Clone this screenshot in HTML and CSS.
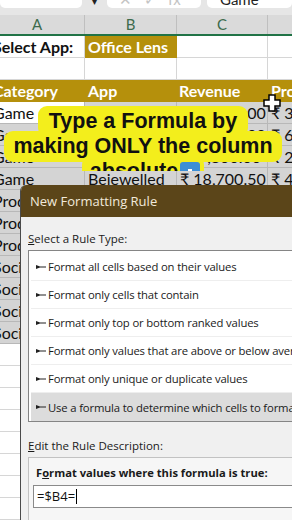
FILE: index.html
```html
<!DOCTYPE html>
<html lang="en">
<head>
    <meta charset="UTF-8">
    <meta name="viewport" content="width=device-width, initial-scale=1.0">
    <title>New Formatting Rule</title>
    <link rel="stylesheet" href="styles.css">
</head>
<body>
    <!-- formula bar strip -->
    <div class="toolbar">
        <div class="tb-box name-box"></div>
        <div class="tb-caret">▾</div>
        <div class="tb-box fx-box"><span class="tb-text faint">✕ &nbsp; ✓ &nbsp; fx</span></div>
        <div class="tb-box value-box"><span class="tb-text">Game</span></div>
    </div>

    <div class="col-heads">
        <div class="col-head">A</div>
        <div class="col-head">B</div>
        <div class="col-head">C</div>
        <div class="col-head"></div>
    </div>

    <div class="sheet">
        <div class="row">
            <div class="cell bold">Select App:</div>
            <div class="cell gold">Office Lens</div>
            <div class="cell"></div>
            <div class="cell"></div>
        </div>
        <div class="row">
            <div class="cell"></div><div class="cell"></div><div class="cell"></div><div class="cell"></div>
        </div>
        <div class="row gold-row">
            <div class="cell">Category</div>
            <div class="cell">App</div>
            <div class="cell">Revenue</div>
            <div class="cell">Profit</div>
        </div>
        <div class="row sel">
            <div class="cell active">Game</div>
            <div class="cell">Candy Crush</div>
            <div class="cell num">₹ 12,450.00</div>
            <div class="cell">₹ 3,100.00</div>
        </div>
        <div class="row sel">
            <div class="cell">Game</div>
            <div class="cell">Clash of Clans</div>
            <div class="cell num">₹ 22,300.00</div>
            <div class="cell">₹ 6,200.00</div>
        </div>
        <div class="row sel">
            <div class="cell">Game</div>
            <div class="cell">Subway Surfers</div>
            <div class="cell num">₹ 9,800.00</div>
            <div class="cell">₹ 2,450.00</div>
        </div>
        <div class="row sel">
            <div class="cell">Game</div>
            <div class="cell">Bejewelled</div>
            <div class="cell num">₹ 18,700.50</div>
            <div class="cell">₹ 4,900.00</div>
        </div>
        <div class="row sel">
            <div class="cell">Productivity</div>
            <div class="cell">Office Lens</div>
            <div class="cell num">₹ 15,200.00</div>
            <div class="cell">₹ 5,000.00</div>
        </div>
        <div class="row sel">
            <div class="cell">Productivity</div>
            <div class="cell">Evernote</div>
            <div class="cell num">₹ 11,300.00</div>
            <div class="cell">₹ 3,800.00</div>
        </div>
        <div class="row sel">
            <div class="cell">Productivity</div>
            <div class="cell">Trello</div>
            <div class="cell num">₹ 8,900.00</div>
            <div class="cell">₹ 2,100.00</div>
        </div>
        <div class="row sel">
            <div class="cell">Social</div>
            <div class="cell">WhatsApp</div>
            <div class="cell num">₹ 25,600.00</div>
            <div class="cell">₹ 7,400.00</div>
        </div>
        <div class="row sel">
            <div class="cell">Social</div>
            <div class="cell">Instagram</div>
            <div class="cell num">₹ 21,000.00</div>
            <div class="cell">₹ 6,300.00</div>
        </div>
        <div class="row sel">
            <div class="cell">Social</div>
            <div class="cell">Snapchat</div>
            <div class="cell num">₹ 13,750.00</div>
            <div class="cell">₹ 3,900.00</div>
        </div>
        <div class="row sel">
            <div class="cell">Social</div>
            <div class="cell">Twitter</div>
            <div class="cell num">₹ 10,400.00</div>
            <div class="cell">₹ 2,700.00</div>
        </div>
        <div class="row"><div class="cell"></div><div class="cell"></div><div class="cell"></div><div class="cell"></div></div>
        <div class="row"><div class="cell"></div><div class="cell"></div><div class="cell"></div><div class="cell"></div></div>
        <div class="row"><div class="cell"></div><div class="cell"></div><div class="cell"></div><div class="cell"></div></div>
        <div class="row"><div class="cell"></div><div class="cell"></div><div class="cell"></div><div class="cell"></div></div>
        <div class="row"><div class="cell"></div><div class="cell"></div><div class="cell"></div><div class="cell"></div></div>
        <div class="row"><div class="cell"></div><div class="cell"></div><div class="cell"></div><div class="cell"></div></div>
        <div class="row"><div class="cell"></div><div class="cell"></div><div class="cell"></div><div class="cell"></div></div>
        <div class="row"><div class="cell"></div><div class="cell"></div><div class="cell"></div><div class="cell"></div></div>
    </div>

    <!-- mouse cursor -->
    <svg class="cursor" width="18" height="18" viewBox="0 0 18 18">
        <path d="M6 1h6v5h5v6h-5v5H6v-5H1V6h5z" fill="#fff" stroke="#000" stroke-width="1.5"/>
    </svg>

    <!-- video caption -->
    <div class="caption">
        <div class="cap-line l1">Type a Formula by</div>
        <div class="cap-line l2">making ONLY the column</div>
        <div class="cap-line l3">absolute<span class="down-icon"><svg width="14" height="14" viewBox="0 0 14 14"><path d="M5 2h4v5h3l-5 5-5-5h3z" fill="#fff"/></svg></span></div>
    </div>

    <!-- dialog window -->
    <div class="dialog">
        <div class="dialog-title">New Formatting Rule</div>
        <div class="dialog-body">
            <div class="label"><u>S</u>elect a Rule Type:</div>
            <div class="rule-list">
                <div class="rule"><svg class="arr" width="10" height="6" viewBox="0 0 10 6"><path d="M0 1l4 1.5h6v1H4L0 5z" fill="#222"/></svg>Format all cells based on their values</div>
                <div class="rule"><svg class="arr" width="10" height="6" viewBox="0 0 10 6"><path d="M0 1l4 1.5h6v1H4L0 5z" fill="#222"/></svg>Format only cells that contain</div>
                <div class="rule"><svg class="arr" width="10" height="6" viewBox="0 0 10 6"><path d="M0 1l4 1.5h6v1H4L0 5z" fill="#222"/></svg>Format only top or bottom ranked values</div>
                <div class="rule"><svg class="arr" width="10" height="6" viewBox="0 0 10 6"><path d="M0 1l4 1.5h6v1H4L0 5z" fill="#222"/></svg>Format only values that are above or below average</div>
                <div class="rule"><svg class="arr" width="10" height="6" viewBox="0 0 10 6"><path d="M0 1l4 1.5h6v1H4L0 5z" fill="#222"/></svg>Format only unique or duplicate values</div>
                <div class="rule selected"><svg class="arr" width="10" height="6" viewBox="0 0 10 6"><path d="M0 1l4 1.5h6v1H4L0 5z" fill="#222"/></svg>Use a formula to determine which cells to format</div>
            </div>
            <div class="label desc-label"><u>E</u>dit the Rule Description:</div>
            <div class="desc-panel">
                <div class="desc-title">F<u>o</u>rmat values where this formula is true:</div>
                <div class="formula-input">=$B4=<span class="caret"></span></div>
            </div>
        </div>
    </div>
</body>
</html>
```

FILE: styles.css
```css
body {
    margin: 0;
    width: 292px;
    height: 520px;
    overflow: hidden;
    position: relative;
    background-color: #fff;
    font-family: 'Lato', sans-serif;
}

/* formula bar */
.toolbar {
    height: 15px;
    background-color: #e6e6e6;
    display: flex;
    align-items: flex-start;
}

.tb-box {
    height: 8px;
    background-color: #fff;
    border-radius: 0 0 5px 5px;
    overflow: hidden;
}

.name-box {
    width: 82px;
}

.tb-caret {
    width: 25px;
    text-align: center;
    font-size: 10px;
    line-height: 6px;
    margin-top: -2px;
    color: #222;
}

.fx-box {
    width: 94px;
    padding-left: 12px;
    box-sizing: border-box;
}

.value-box {
    flex: 1;
    margin-left: 6px;
    padding-left: 13px;
}

.tb-text {
    display: block;
    margin-top: -9px;
    font-size: 15px;
    line-height: 16px;
    color: #222;
    white-space: nowrap;
}

.tb-text.faint {
    color: #c4c4c4;
}

/* column headers */
.col-heads {
    display: grid;
    grid-template-columns: 95px 92px 91px 100px;
    margin-left: -10px;
    height: 19px;
    background-color: #dadada;
    border-bottom: 2px solid #217346;
}

.col-head {
    border-right: 1px solid #bfbfbf;
    text-align: center;
    font-size: 15px;
    line-height: 19px;
    color: #3d6b4c;
}

/* sheet */
.sheet {
    margin-left: -10px;
}

.row {
    display: grid;
    grid-template-columns: 95px 92px 91px 100px;
    height: 22px;
}

.cell {
    box-sizing: border-box;
    border-right: 1px solid #d6d6d6;
    border-bottom: 1px solid #d6d6d6;
    padding: 0 3px;
    font-size: 16px;
    line-height: 21px;
    color: #111;
    white-space: nowrap;
    overflow: hidden;
}

.cell.bold {
    font-weight: bold;
}

.cell.gold,
.gold-row .cell {
    background-color: #b5900c;
    color: #fff;
    font-weight: bold;
    border-color: #b5900c;
}

.gold-row .cell:nth-child(3) {
    padding-left: 2px;
}

.sel .cell {
    background-color: #d4d4d4;
    border-color: #b8b8b8;
}

.sel .cell.active {
    background-color: #fff;
}

.cell.num {
    text-align: right;
    padding-right: 6px;
}

/* cursor */
.cursor {
    position: absolute;
    left: 263px;
    top: 94px;
}

/* caption */
.caption {
    position: absolute;
    left: 0;
    top: 106px;
    width: 286px;
    height: 65px;
    overflow: hidden;
    text-align: center;
    font-family: 'Liberation Sans', Arial, sans-serif;
    font-weight: bold;
    font-size: 21.5px;
    line-height: 25px;
    color: #111;
}

.cap-line {
    position: relative;
    display: table;
    margin: -6px auto 0;
    padding: 3px 11px;
    background-color: #f3ee1c;
    border-radius: 9px;
    white-space: nowrap;
}

.cap-line.l1 {
    margin-top: 0;
    z-index: 3;
}

.cap-line.l2 {
    z-index: 2;
    padding: 3px 9px;
}

.cap-line.l3 {
    z-index: 1;
    padding: 3px 4px 3px 8px;
}

.down-icon {
    display: inline-block;
    width: 20px;
    height: 20px;
    margin-left: 2px;
    vertical-align: -3px;
    background-color: #3c8fd6;
    border-radius: 3px;
    text-align: center;
}

.down-icon svg {
    margin-top: 3px;
}

/* dialog */
.dialog {
    position: absolute;
    left: 20px;
    top: 185px;
    width: 300px;
    bottom: 0;
    background-color: #f0f0f0;
    border-left: 1px solid #4a4a4a;
    border-top-left-radius: 6px;
    overflow: hidden;
    font-family: 'Open Sans', sans-serif;
    color: #1a1a1a;
}

.dialog-title {
    height: 32px;
    line-height: 32px;
    padding-left: 9px;
    background-color: #5b4519;
    color: #f2eadb;
    font-size: 13px;
}

.dialog-body {
    padding-left: 7px;
}

.label {
    margin-top: 14px;
    font-size: 11.5px;
    line-height: 16px;
}

.rule-list {
    margin-top: 3px;
    border: 1px solid #858585;
    border-right: none;
    background-color: #fff;
    padding: 2px 0 0 2px;
}

.rule {
    display: flex;
    align-items: center;
    height: 28px;
    box-sizing: border-box;
    padding-left: 5px;
    border-bottom: 1px solid #eeeeee;
    font-size: 11.3px;
    letter-spacing: -0.15px;
    white-space: nowrap;
}

.rule .arr {
    margin-right: 2px;
    flex-shrink: 0;
}

.rule.selected {
    background-color: #dcdcdc;
    border-bottom: none;
}

.desc-label {
    margin-top: 16px;
}

.desc-panel {
    margin-top: 3px;
    height: 80px;
    border: 1px solid #c2c2c2;
    border-right: none;
    background-color: #f6f6f6;
    padding: 7px 0 0 4px;
}

.desc-title {
    font-size: 11.2px;
    font-weight: bold;
    line-height: 16px;
    padding-left: 3px;
    white-space: nowrap;
}

.formula-input {
    margin-top: 4px;
    height: 23px;
    box-sizing: border-box;
    border: 1px solid #8a8a8a;
    border-right: none;
    background-color: #fff;
    padding-left: 3px;
    font-size: 13px;
    line-height: 21px;
    color: #111;
}

.caret {
    display: inline-block;
    width: 1px;
    height: 15px;
    background-color: #000;
    vertical-align: -3px;
    margin-left: 1px;
}
```
